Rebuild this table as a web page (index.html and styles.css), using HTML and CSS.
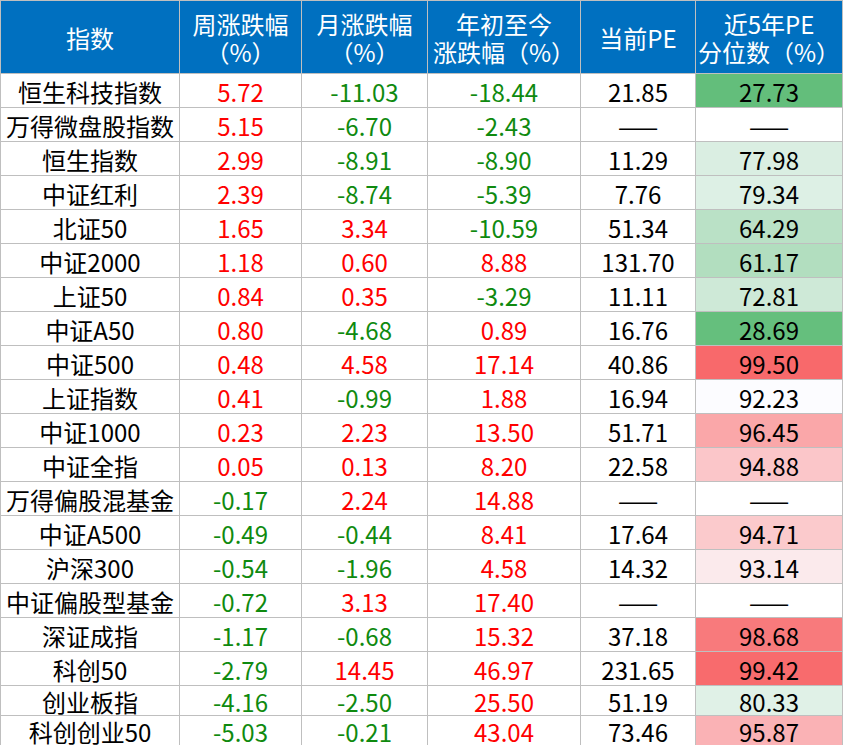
FILE: index.html
```html
<!DOCTYPE html>
<html lang="zh-CN">
<head>
<meta charset="utf-8">
<title>指数涨跌幅与PE分位数</title>
<link rel="stylesheet" href="styles.css">
</head>
<body>
<table class="sheet">
  <colgroup>
    <col class="c-name"><col class="c-week"><col class="c-month"><col class="c-ytd"><col class="c-pe"><col class="c-pct">
  </colgroup>
  <thead>
    <tr class="head">
      <th>指数</th>
      <th>周涨跌幅<br>（%）</th>
      <th>月涨跌幅<br>（%）</th>
      <th>年初至今<br>涨跌幅（%）</th>
      <th>当前PE</th>
      <th>近5年PE<br>分位数（%）</th>
    </tr>
  </thead>
  <tbody>
    <tr><td class="name">恒生科技指数</td><td class="num up">5.72</td><td class="num down">-11.03</td><td class="num down">-18.44</td><td class="num">21.85</td><td class="num" style="background:rgb(99,190,123)">27.73</td></tr>
    <tr><td class="name">万得微盘股指数</td><td class="num up">5.15</td><td class="num down">-6.70</td><td class="num down">-2.43</td><td class="num">——</td><td class="num">——</td></tr>
    <tr><td class="name">恒生指数</td><td class="num up">2.99</td><td class="num down">-8.91</td><td class="num down">-8.90</td><td class="num">11.29</td><td class="num" style="background:rgb(218,238,226)">77.98</td></tr>
    <tr><td class="name">中证红利</td><td class="num up">2.39</td><td class="num down">-8.74</td><td class="num down">-5.39</td><td class="num">7.76</td><td class="num" style="background:rgb(221,240,229)">79.34</td></tr>
    <tr><td class="name">北证50</td><td class="num up">1.65</td><td class="num up">3.34</td><td class="num down">-10.59</td><td class="num">51.34</td><td class="num" style="background:rgb(186,225,198)">64.29</td></tr>
    <tr><td class="name">中证2000</td><td class="num up">1.18</td><td class="num up">0.60</td><td class="num up">8.88</td><td class="num">131.70</td><td class="num" style="background:rgb(178,222,191)">61.17</td></tr>
    <tr><td class="name">上证50</td><td class="num up">0.84</td><td class="num up">0.35</td><td class="num down">-3.29</td><td class="num">11.11</td><td class="num" style="background:rgb(206,233,215)">72.81</td></tr>
    <tr><td class="name">中证A50</td><td class="num up">0.80</td><td class="num down">-4.68</td><td class="num up">0.89</td><td class="num">16.76</td><td class="num" style="background:rgb(101,191,125)">28.69</td></tr>
    <tr><td class="name">中证500</td><td class="num up">0.48</td><td class="num up">4.58</td><td class="num up">17.14</td><td class="num">40.86</td><td class="num" style="background:rgb(248,105,107)">99.50</td></tr>
    <tr><td class="name">上证指数</td><td class="num up">0.41</td><td class="num down">-0.99</td><td class="num up">1.88</td><td class="num">16.94</td><td class="num" style="background:rgb(252,252,255)">92.23</td></tr>
    <tr><td class="name">中证1000</td><td class="num up">0.23</td><td class="num up">2.23</td><td class="num up">13.50</td><td class="num">51.71</td><td class="num" style="background:rgb(250,167,169)">96.45</td></tr>
    <tr><td class="name">中证全指</td><td class="num up">0.05</td><td class="num up">0.13</td><td class="num up">8.20</td><td class="num">22.58</td><td class="num" style="background:rgb(251,198,201)">94.88</td></tr>
    <tr><td class="name">万得偏股混基金</td><td class="num down">-0.17</td><td class="num up">2.24</td><td class="num up">14.88</td><td class="num">——</td><td class="num">——</td></tr>
    <tr><td class="name">中证A500</td><td class="num down">-0.49</td><td class="num down">-0.44</td><td class="num up">8.41</td><td class="num">17.64</td><td class="num" style="background:rgb(251,202,204)">94.71</td></tr>
    <tr><td class="name">沪深300</td><td class="num down">-0.54</td><td class="num down">-1.96</td><td class="num up">4.58</td><td class="num">14.32</td><td class="num" style="background:rgb(251,234,236)">93.14</td></tr>
    <tr><td class="name">中证偏股型基金</td><td class="num down">-0.72</td><td class="num up">3.13</td><td class="num up">17.40</td><td class="num">——</td><td class="num">——</td></tr>
    <tr><td class="name">深证成指</td><td class="num down">-1.17</td><td class="num down">-0.68</td><td class="num up">15.32</td><td class="num">37.18</td><td class="num" style="background:rgb(248,122,124)">98.68</td></tr>
    <tr><td class="name">科创50</td><td class="num down">-2.79</td><td class="num up">14.45</td><td class="num up">46.97</td><td class="num">231.65</td><td class="num" style="background:rgb(248,107,109)">99.42</td></tr>
    <tr class="short"><td class="name">创业板指</td><td class="num down">-4.16</td><td class="num down">-2.50</td><td class="num up">25.50</td><td class="num">51.19</td><td class="num" style="background:rgb(224,241,231)">80.33</td></tr>
    <tr class="short"><td class="name">科创创业50</td><td class="num down">-5.03</td><td class="num down">-0.21</td><td class="num up">43.04</td><td class="num">73.46</td><td class="num" style="background:rgb(250,178,181)">95.87</td></tr>
  </tbody>
</table>
</body>
</html>
```
FILE: styles.css
```css
html, body {
  margin: 0;
  padding: 0;
  background: #ffffff;
}

.sheet {
  border-collapse: separate;
  border-spacing: 1px;
  background: #bfbfbf;
  table-layout: fixed;
  width: 843px;
  font-family: "Noto Sans CJK SC", "Noto Sans", sans-serif;
  font-size: 24px;
  color: #000000;
  text-spacing-trim: space-all;
}

.c-name { width: 178px; }
.c-week { width: 121px; }
.c-month { width: 125px; }
.c-ytd { width: 152px; }
.c-pe { width: 114px; }
.c-pct { width: 146px; }

.sheet th,
.sheet td {
  padding: 0;
  text-align: center;
  vertical-align: middle;
  white-space: nowrap;
}

.head th {
  height: 71px;
  background: #0070c0;
  color: #ffffff;
  font-weight: normal;
  line-height: 28px;
  padding-top: 1px;
}

.sheet td {
  height: 30px;
  line-height: 30px;
  background: #ffffff;
  padding-top: 3px;
}

.sheet tr.short td {
  height: 27px;
  line-height: 27px;
  padding-top: 2px;
}

.num {
  font-variant-numeric: tabular-nums;
}

.up { color: #ff0000; }
.down { color: #0f8a0f; }
```
